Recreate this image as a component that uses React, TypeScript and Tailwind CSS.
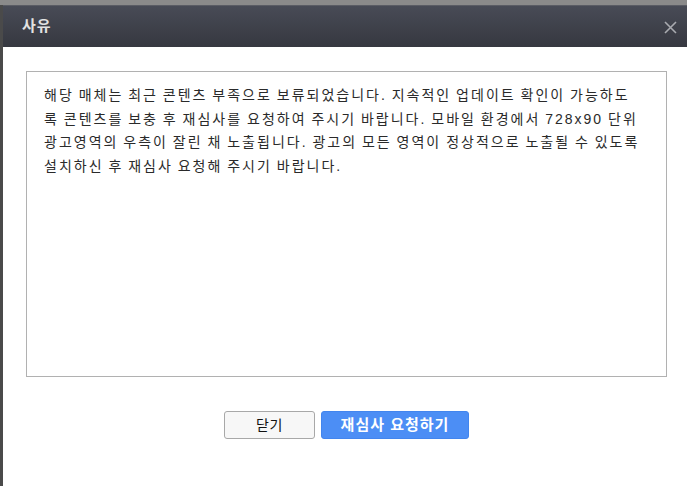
const font = { fontFamily: '"Liberation Sans", "Noto Sans CJK KR", sans-serif' };

export default function App() {
  return (
    <div className="w-[687px] h-[486px] overflow-hidden bg-[#8a8a8a] pt-[5px]" style={font}>
      <div className="h-[481px] border-l-[3px] border-[#4a4a4a] bg-white flex flex-col">
        {/* header */}
        <div className="h-[42px] shrink-0 flex items-center justify-between pl-[19px] pr-[10px] bg-gradient-to-b from-[#484b56] to-[#363840] border-t border-[#5a5c64]">
          <span className="text-[15px] font-bold text-[#e2e2e2] tracking-[1px]">사유</span>
          <svg width="13" height="13" viewBox="0 0 13 13" className="mt-[1px]">
            <path d="M1 1 L12 12 M12 1 L1 12" stroke="#a9abb0" strokeWidth="1.6" fill="none" />
          </svg>
        </div>

        {/* body */}
        <div className="flex-1 flex flex-col pl-[23px] pr-[20px] pt-[24px]">
          <div className="h-[306px] border border-[#b1b1b1] pl-[17px] pt-[12px] text-[14px] leading-[23.6px] text-[#2a2a2a] tracking-[2px] [word-spacing:-1px]">
            <div className="whitespace-nowrap">해당 매체는 최근 콘텐츠 부족으로 보류되었습니다. 지속적인 업데이트 확인이 가능하도</div>
            <div className="whitespace-nowrap">록 콘텐츠를 보충 후 재심사를 요청하여 주시기 바랍니다. 모바일 환경에서 728x90 단위</div>
            <div className="whitespace-nowrap">광고영역의 우측이 잘린 채 노출됩니다. 광고의 모든 영역이 정상적으로 노출될 수 있도록</div>
            <div className="whitespace-nowrap">설치하신 후 재심사 요청해 주시기 바랍니다.</div>
          </div>

          <div className="flex justify-center gap-[6px] mt-[34px]">
            <button className="w-[91px] h-[28px] rounded-[3px] border border-[#a8a8a8] bg-[#f7f7f7] text-[14px] text-[#111] tracking-[0.5px]">
              닫기
            </button>
            <button className="w-[148px] h-[28px] rounded-[3px] border border-[#4285ee] bg-[#4c8ef5] text-[15px] font-bold text-white tracking-[1px]">
              재심사 요청하기
            </button>
          </div>
        </div>
      </div>
    </div>
  );
}
